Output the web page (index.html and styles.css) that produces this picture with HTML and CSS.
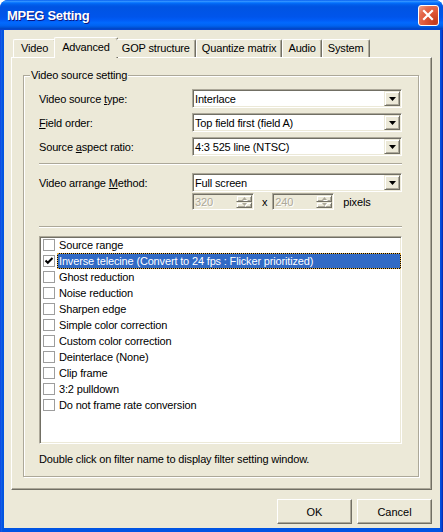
FILE: index.html
```html
<!DOCTYPE html>
<html lang="en">
<head>
<meta charset="utf-8">
<title>MPEG Setting</title>
<link rel="stylesheet" href="styles.css">
</head>
<body>
<div class="window">
  <div class="titlebar">
    <span class="title">MPEG Setting</span>
    <button class="close" aria-label="Close">
      <svg viewBox="0 0 21 21" width="21" height="21"><path d="M6 6 L14 14 M14 6 L6 14" stroke="#fff" stroke-width="2.2" stroke-linecap="square" fill="none"/></svg>
    </button>
  </div>
  <div class="client">
    <div class="tabs">
      <div class="tab">Video</div>
      <div class="tab active">Advanced</div>
      <div class="tab">GOP structure</div>
      <div class="tab">Quantize matrix</div>
      <div class="tab">Audio</div>
      <div class="tab">System</div>
    </div>
    <div class="panel">
      <section class="group">
        <h2 class="group-title">Video source setting</h2>
        <div class="field">
          <span class="field-label">Video source <u>t</u>ype:</span>
          <div class="combo"><span class="combo-value">Interlace</span><span class="drop"><svg viewBox="0 0 7 4" width="7" height="4"><path d="M0 0 H7 L3.5 4 Z" fill="#000"/></svg></span></div>
        </div>
        <div class="field">
          <span class="field-label"><u>F</u>ield order:</span>
          <div class="combo"><span class="combo-value">Top field first (field A)</span><span class="drop"><svg viewBox="0 0 7 4" width="7" height="4"><path d="M0 0 H7 L3.5 4 Z" fill="#000"/></svg></span></div>
        </div>
        <div class="field">
          <span class="field-label">Source <u>a</u>spect ratio:</span>
          <div class="combo"><span class="combo-value">4:3 525 line (NTSC)</span><span class="drop"><svg viewBox="0 0 7 4" width="7" height="4"><path d="M0 0 H7 L3.5 4 Z" fill="#000"/></svg></span></div>
        </div>
        <div class="sep sep-1"></div>
        <div class="field">
          <span class="field-label">Video arrange <u>M</u>ethod:</span>
          <div class="combo"><span class="combo-value">Full screen</span><span class="drop"><svg viewBox="0 0 7 4" width="7" height="4"><path d="M0 0 H7 L3.5 4 Z" fill="#000"/></svg></span></div>
        </div>
        <div class="size-row">
          <div class="spin">
            <span class="spin-value">320</span>
            <span class="spin-btns">
              <span class="spin-btn"><svg viewBox="0 0 5 3" width="5" height="3"><path d="M0 3 H5 L2.5 0 Z" fill="#aca899"/></svg></span>
              <span class="spin-btn"><svg viewBox="0 0 5 3" width="5" height="3"><path d="M0 0 H5 L2.5 3 Z" fill="#aca899"/></svg></span>
            </span>
          </div>
          <span class="times">x</span>
          <div class="spin">
            <span class="spin-value">240</span>
            <span class="spin-btns">
              <span class="spin-btn"><svg viewBox="0 0 5 3" width="5" height="3"><path d="M0 3 H5 L2.5 0 Z" fill="#aca899"/></svg></span>
              <span class="spin-btn"><svg viewBox="0 0 5 3" width="5" height="3"><path d="M0 0 H5 L2.5 3 Z" fill="#aca899"/></svg></span>
            </span>
          </div>
          <span class="unit">pixels</span>
        </div>
        <div class="sep sep-2"></div>
        <ul class="list">
          <li class="item"><span class="check"></span><span class="item-text">Source range</span></li>
          <li class="item selected"><span class="check"><svg viewBox="0 0 10 10" width="10" height="10"><path d="M1.5 4.5 L3.8 6.8 L8.5 2" stroke="#000" stroke-width="2" fill="none"/></svg></span><span class="item-text">Inverse telecine (Convert to 24 fps : Flicker prioritized)</span></li>
          <li class="item"><span class="check"></span><span class="item-text">Ghost reduction</span></li>
          <li class="item"><span class="check"></span><span class="item-text">Noise reduction</span></li>
          <li class="item"><span class="check"></span><span class="item-text">Sharpen edge</span></li>
          <li class="item"><span class="check"></span><span class="item-text">Simple color correction</span></li>
          <li class="item"><span class="check"></span><span class="item-text">Custom color correction</span></li>
          <li class="item"><span class="check"></span><span class="item-text">Deinterlace (None)</span></li>
          <li class="item"><span class="check"></span><span class="item-text">Clip frame</span></li>
          <li class="item"><span class="check"></span><span class="item-text">3:2 pulldown</span></li>
          <li class="item"><span class="check"></span><span class="item-text">Do not frame rate conversion</span></li>
        </ul>
        <p class="hint">Double click on filter name to display filter setting window.</p>
      </section>
    </div>
    <div class="buttons">
      <button class="btn">OK</button>
      <button class="btn">Cancel</button>
    </div>
  </div>
</div>
</body>
</html>
```
FILE: styles.css
```css
* { box-sizing: border-box; }
html, body { margin: 0; padding: 0; background: #fff; }
body {
  font-family: "Liberation Sans", Arial, sans-serif;
  font-size: 11px;
  letter-spacing: -0.16px;
  color: #000;
}

.window {
  width: 443px;
  height: 532px;
  display: flex;
  flex-direction: column;
  background: linear-gradient(90deg, #0831d9 0, #166aee 1px, #0855dd 2px, #0054e3 3px, #0054e3 calc(100% - 3px), #0841d0 calc(100% - 1px), #001ea0 100%);
  border-radius: 8px 8px 0 0;
  overflow: hidden;
}

.titlebar {
  height: 30px;
  flex: none;
  display: flex;
  align-items: center;
  justify-content: space-between;
  padding: 0 4px 0 7px;
  background: linear-gradient(180deg, #0058ee 0%, #3593ff 4%, #288eff 6%, #127dff 8%, #036ffc 10%, #0262ee 14%, #0057e5 20%, #0054e3 24%, #0055eb 56%, #005bf5 66%, #026afe 76%, #0062ef 86%, #0052d6 92%, #0046c4 96%, #0845d8 100%);
}
.title {
  color: #fff;
  font-weight: bold;
  font-size: 13px;
  letter-spacing: -0.3px;
  text-shadow: 1px 1px 0 #0a1883;
  padding-top: 1px;
}
.close {
  width: 21px;
  height: 21px;
  padding: 0;
  border: 1px solid #fff;
  border-radius: 3px;
  background: radial-gradient(circle at 85% 85%, #c23a1c 0%, #df5637 45%, #e46a4d 70%, #f0a58f 100%);
  display: flex;
  align-items: center;
  justify-content: center;
  margin-top: 1px;
}
.close svg { display: block; margin: -1px; }

.client {
  flex: 1;
  margin: 0 3px 4px 4px;
  background: #ece9d8;
  padding: 7px 8px 4px 7px;
  display: flex;
  flex-direction: column;
}

.tabs {
  display: flex;
  align-items: flex-end;
  height: 20px;
  padding-left: 2px;
  position: relative;
  z-index: 1;
}
.tab {
  height: 18px;
  padding: 0 5px 1px;
  display: flex;
  align-items: center;
  border-top: 1px solid #fff;
  border-left: 1px solid #fff;
  border-right: 1px solid #716f64;
  box-shadow: inset -1px 0 0 #aca899;
  border-radius: 2px 2px 0 0;
  background: #ece9d8;
  white-space: nowrap;
}
.tab:first-child { padding: 0 7px 1px; }
.tab.active {
  height: 21px;
  margin: 0 -2px -1px;
  padding: 0 7px 3px;
}
.tab.active + .tab { border-left-color: transparent; }

.panel {
  height: 433px;
  flex: none;
  border: 1px solid;
  border-color: #fff #716f64 #716f64 #fff;
  box-shadow: inset -1px -1px 0 #aca899;
  padding: 17px 12px 12px 11px;
  display: flex;
  flex-direction: column;
}

.group {
  flex: 1;
  border: 1px solid #aca899;
  box-shadow: 1px 1px 0 #fff, inset 1px 1px 0 #fff;
  padding: 0 16px 0 15px;
  display: flex;
  flex-direction: column;
}
.group-title {
  align-self: flex-start;
  margin: -7px 0 0 -9px;
  padding: 0 1px;
  background: #ece9d8;
  font: inherit;
  line-height: 13px;
}

.field {
  display: flex;
  align-items: center;
  height: 19px;
  margin-top: 5px;
}
.group-title + .field { margin-top: 7px; }
.field-label { width: 153px; flex: none; }

.combo {
  flex: 1;
  height: 19px;
  display: flex;
  align-items: stretch;
  background: #fff;
  border: 1px solid;
  border-color: #aca899 #fff #fff #aca899;
  box-shadow: inset 1px 1px 0 #716f64, inset -1px -1px 0 #ece9d8;
}
.combo-value {
  flex: 1;
  padding-left: 2px;
  display: flex;
  align-items: center;
  padding-top: 1px;
}
.drop {
  width: 16px;
  margin: 1px 1px 1px 0;
  background: #ece9d8;
  border: 1px solid;
  border-color: #ece9d8 #716f64 #716f64 #ece9d8;
  box-shadow: inset 1px 1px 0 #fff, inset -1px -1px 0 #aca899;
  display: flex;
  align-items: center;
  justify-content: center;
}
.drop svg { display: block; }

.sep {
  height: 2px;
  border-top: 1px solid #aca899;
  border-bottom: 1px solid #fff;
}
.sep-1 { margin: 7px 0 3px; }
.sep-2 { margin-top: 16px; }

.size-row {
  display: flex;
  align-items: center;
  height: 17px;
  margin: 1px 0 0 153px;
}
.spin {
  width: 62px;
  height: 17px;
  display: flex;
  border: 1px solid;
  border-color: #aca899 #fff #fff #aca899;
  box-shadow: inset 1px 1px 0 #716f64, inset -1px -1px 0 #ece9d8;
  background: #ece9d8;
}
.spin-value {
  flex: 1;
  padding: 1px 0 0 2px;
  color: #aca899;
  text-shadow: 1px 1px 0 #fff;
  display: flex;
  align-items: center;
}
.spin-btns {
  width: 16px;
  margin: 1px 1px 1px 0;
  display: flex;
  flex-direction: column;
}
.spin-btn {
  flex: 1;
  border: 1px solid;
  border-color: #ece9d8 #716f64 #716f64 #ece9d8;
  box-shadow: inset 1px 1px 0 #fff, inset -1px -1px 0 #aca899;
  display: flex;
  align-items: center;
  justify-content: center;
}
.spin-btn svg { display: block; filter: drop-shadow(1px 1px 0 #fff); }
.times { margin: 0 5px 0 8px; }
.unit { margin-left: 9px; }

.list {
  list-style: none;
  margin: 8px 0 0;
  padding: 0 0 0 3px;
  height: 208px;
  background: #fff;
  border: 1px solid;
  border-color: #aca899 #fff #fff #aca899;
  box-shadow: inset 1px 1px 0 #716f64, inset -1px -1px 0 #ece9d8;
}
.item {
  height: 16px;
  display: flex;
  align-items: center;
}
.check {
  width: 12px;
  height: 12px;
  flex: none;
  border: 1px solid #9d9d9d;
  background: #fff;
  margin-right: 2px;
  display: flex;
  align-items: center;
  justify-content: center;
}
.check svg { display: block; }
.item-text {
  flex: 1;
  height: 16px;
  line-height: 14px;
  padding: 0 1px;
  border: 1px solid transparent;
  white-space: nowrap;
}
.selected .item-text {
  color: #fff;
  border: 1px dotted #e8b34a;
  background: linear-gradient(#316ac5, #316ac5) padding-box, linear-gradient(#000, #000) border-box;
}

.hint {
  margin: 9px 0 0;
  line-height: 13px;
}

.buttons {
  display: flex;
  justify-content: flex-end;
  gap: 5px;
  margin-top: 9px;
}
.btn {
  width: 75px;
  height: 25px;
  font: inherit;
  color: #000;
  background: #ece9d8;
  border: 1px solid;
  border-color: #fff #716f64 #716f64 #fff;
  box-shadow: inset -1px -1px 0 #aca899;
  padding: 0;
}
```
